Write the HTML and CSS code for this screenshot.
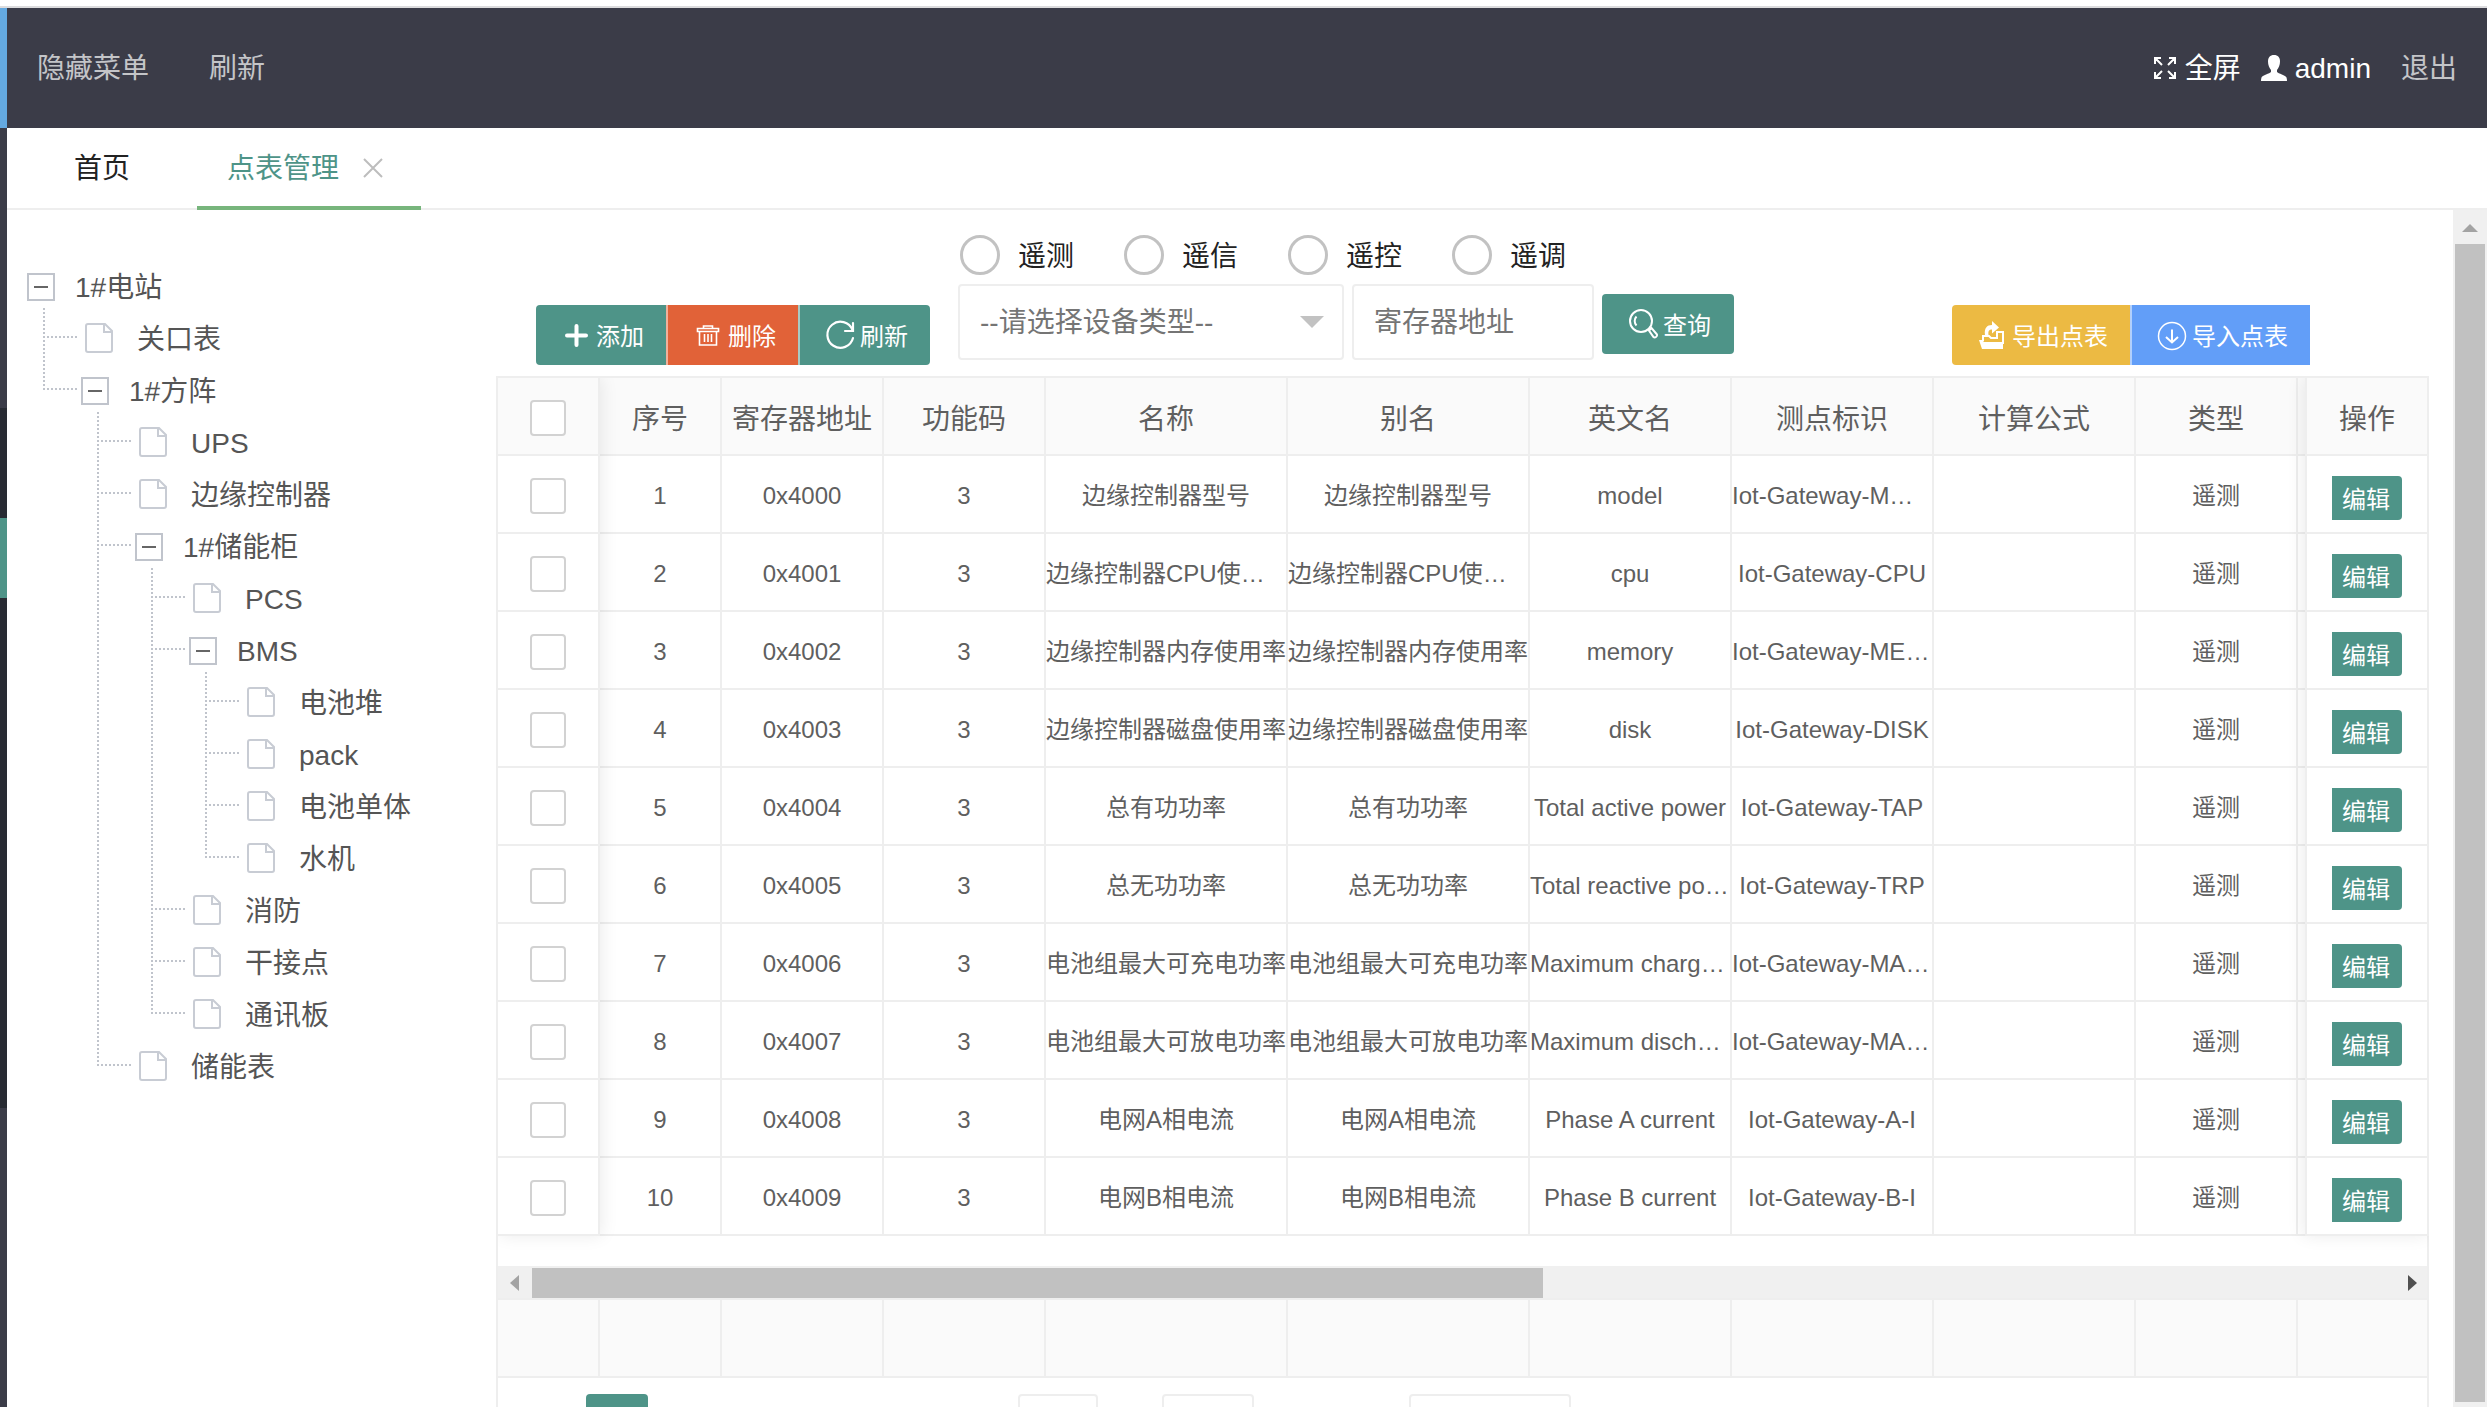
FILE: index.html
```html
<!DOCTYPE html>
<html lang="zh-CN">
<head>
<meta charset="utf-8">
<title>点表管理</title>
<link rel="stylesheet" href="styles.css">
</head>
<body>
<div class="app">
  <nav class="rail">
    <div class="rail-logo"></div>
    <div class="rail-head"></div>
    <div class="rail-item"></div>
    <div class="rail-active"></div>
    <div class="rail-menu"></div>
    <div class="rail-rest"></div>
  </nav>
  <div class="page">
    <header class="topbar">
      <a class="top-link" href="#">隐藏菜单</a>
      <a class="top-link" href="#">刷新</a>
      <div class="top-right">
        <a class="top-action" href="#">
          <svg width="24" height="24" viewBox="0 0 24 24" fill="none" stroke="#fff" stroke-width="2"><path d="M2 8V2h6M2 2l7 7M16 2h6v6M22 2l-7 7M2 16v6h6M2 22l7-7M22 16v6h-6M22 22l-7-7"/></svg>
          全屏</a>
        <a class="top-action" href="#">
          <svg width="26" height="26" viewBox="0 0 26 26" fill="#fff"><path d="M13 0c4 0 6 2.600 6 6.500 0 3.500-1.300 6.500-3 8.500v2c1 1.500 9 3.500 9.500 5.500.400 1.200.500 2.500.500 3.500H0c0-1 .100-2.300.500-3.500C1 20.500 9 18.500 10 17v-2c-1.700-2-3-5-3-8.500C7 2.600 9 0 13 0z"/></svg>
          admin</a>
        <a class="top-link top-exit" href="#">退出</a>
      </div>
    </header>
    <div class="tabs">
      <a class="tab" href="#">首页</a>
      <a class="tab tab-on" href="#">点表管理
        <svg width="20" height="20" viewBox="0 0 20 20" stroke="#bdbdbd" stroke-width="2"><path d="M1 1l18 18M19 1L1 19"/></svg></a>
    </div>
    <div class="body">
      <aside class="side">
        <ul class="tree" id="tree"></ul>
      </aside>
      <main class="content">
        <form class="toolbar">
          <div class="btns">
            <button class="btn btn-l" type="button"><svg class="ic" viewBox="0 0 32 32" stroke="#fff" stroke-width="4" stroke-linecap="round"><path d="M16.500 7v19M7 16.500h19"/></svg>添加</button>
            <button class="btn btn-red" type="button"><svg class="ic" viewBox="0 0 32 32" fill="none" stroke="#fff" stroke-width="1.600"><path d="M5.500 9.500h21v3h-21zM11.500 9.500V7h9v2.500M7.500 12.500v13.500h17V12.500M12.500 15v8M16 15v8M19.500 15v8"/></svg>删除</button>
            <button class="btn btn-r" type="button"><svg class="ic" viewBox="0 0 32 32" fill="none" stroke="#fff" stroke-width="2.200" stroke-linecap="round"><path d="M29 4v8h-8M28.500 11A13 13 0 1 0 29 19"/></svg>刷新</button>
          </div>
          <div class="filters">
            <div class="radios">
              <label class="radio"><input type="radio" name="kind"><span>遥测</span></label>
              <label class="radio"><input type="radio" name="kind"><span>遥信</span></label>
              <label class="radio"><input type="radio" name="kind"><span>遥控</span></label>
              <label class="radio"><input type="radio" name="kind"><span>遥调</span></label>
            </div>
            <div class="fields">
              <div class="select"><select aria-label="设备类型"><option>--请选择设备类型--</option></select></div>
              <input class="addr" type="text" placeholder="寄存器地址" aria-label="寄存器地址">
              <button class="btn btn-search" type="button"><svg class="ic" viewBox="0 0 32 32" fill="none" stroke="#fff" stroke-width="2"><circle cx="14" cy="13" r="11"/><path d="M9.500 17.500A6.500 6.500 0 0 1 9.500 8.500M22 22.500l2.500-2.500 5.500 6.500q.500 1.500-1 2.500t-2.500 0z"/></svg>查询</button>
            </div>
          </div>
          <div class="btns btns-io">
            <button class="btn btn-l btn-gold" type="button"><svg class="ic" viewBox="0 0 32 32" fill="#fff"><path d="M3 21h3l2 2h19v7H6z"/><path d="M9 16C8 9 11 6 16 6V2l7 6.500-7 6v-4c-3 0-4 1.500-3.500 5.500z"/><path d="M7 22v-5h6l2 2h6v-6h6v12" fill="none" stroke="#fff" stroke-width="2"/></svg>导出点表</button>
            <button class="btn btn-blue" type="button"><svg class="ic" viewBox="0 0 32 32" fill="none" stroke="#fff" stroke-width="2"><circle cx="16" cy="17" r="13.500" stroke-width="1.500"/><path d="M16 10.500v13M10 18l6 5.500 6-5.500"/></svg>导入点表</button>
          </div>
        </form>
        <div class="grid">
          <div class="grid-view">
            <table class="data">
              <colgroup><col class="c-check"><col class="c-no"><col class="c-mid"><col class="c-mid"><col class="c-wide"><col class="c-wide"><col class="c-en"><col class="c-en"><col><col class="c-mid"><col class="c-gap"><col class="c-no"></colgroup>
              <thead><tr><th><input type="checkbox" aria-label="全选"></th><th>序号</th><th>寄存器地址</th><th>功能码</th><th>名称</th><th>别名</th><th>英文名</th><th>测点标识</th><th>计算公式</th><th>类型</th><th></th><th>操作</th></tr></thead>
              <tbody id="rows"></tbody>
            </table>
            <div class="shade shade-l"></div>
            <div class="shade shade-r"></div>
          </div>
          <div class="hbar"><i class="arrow arrow-l"></i><div class="hthumb"></div><i class="arrow arrow-r"></i></div>
          <table class="data total">
            <colgroup><col class="c-check"><col class="c-no"><col class="c-mid"><col class="c-mid"><col class="c-wide"><col class="c-wide"><col class="c-en"><col class="c-en"><col><col class="c-mid"><col class="c-last"></colgroup>
            <tbody><tr><td></td><td></td><td></td><td></td><td></td><td></td><td></td><td></td><td></td><td></td><td></td></tr></tbody>
          </table>
          <div class="pager">
            <span class="pg-now"></span><span class="pg-box pg-skip"></span><span class="pg-box pg-go"></span><span class="pg-box pg-limit"></span>
          </div>
        </div>
      </main>
      <div class="vbar"><i class="arrow arrow-u"></i><div class="vthumb"></div></div>
    </div>
  </div>
</div>
<script src="app.js"></script>
</body>
</html>
```
FILE: styles.css
```css
* { box-sizing: border-box; }
body {
  margin: 0;
  height: 100vh;
  overflow: hidden;
  background: #fff;
  color: #5f5f5f;
  font: 28px/40px "Liberation Sans", "Noto Sans CJK SC", sans-serif;
}
a { color: inherit; text-decoration: none; }
button, input, select { font: inherit; margin: 0; }
ul { list-style: none; margin: 0; padding: 0; }

.app { display: flex; height: 100vh; padding-top: 6px; }
.rail { display: flex; flex-direction: column; width: 7px; border-top: 2px solid #dcdcde; }
.rail-logo { height: 120px; background: #64a9e0; }
.rail-head { height: 280px; background: #3b3c48; }
.rail-item { height: 110px; background: #282b33; }
.rail-active { height: 80px; background: #4e9488; }
.rail-menu { height: 510px; background: #282b33; }
.rail-rest { flex: 1; background: #3b3c48; }
.page { flex: 1; min-width: 0; display: flex; flex-direction: column; border-top: 2px solid #dcdcde; }

.topbar { flex: none; display: flex; align-items: center; gap: 60px; height: 120px; padding: 2px 30px 0; background: #3b3c48; }
.top-link { color: #c4c5c8; }
.top-right { display: flex; align-items: center; gap: 20px; margin-left: auto; color: #fff; }
.top-action { display: flex; align-items: center; gap: 8px; }
.top-action svg { margin-top: -2px; }
.top-exit { margin-left: 10px; }

.tabs { flex: none; display: flex; height: 82px; padding-left: 37px; border-bottom: 2px solid #eee; }
.tab { display: flex; align-items: center; gap: 24px; height: 82px; padding: 0 30px; color: #222; }
.tab-on { margin-left: 37px; padding-right: 38px; color: #4e9488; border-bottom: 4px solid #77b57c; padding-top: 4px; }
.tab svg { margin-top: -2px; }

.body { flex: 1; min-height: 0; display: flex; }
.side { width: 489px; flex: none; padding: 50px 0 0 20px; color: #555; }
.tree ul { padding-left: 54px; }
.tree li { position: relative; }
.node { display: flex; align-items: center; height: 52px; }
.node span { padding-top: 3px; }
.box { width: 28px; height: 28px; margin: 2px 20px 0 0; padding: 0; border: 2px solid #c0c4cc; background: #fff; }
.box::after { content: ""; display: block; width: 14px; height: 2px; margin: 0 auto; background: #666; }
.file { width: 28px; height: 32px; margin: 0 24px 0 4px; fill: none; stroke: #c8ccd4; stroke-width: 2; }
.tree ul > li::before {
  content: ""; position: absolute; left: -38px; top: -4px; bottom: 0; width: 2px;
  background: repeating-linear-gradient(#c0c4cc 0 2px, transparent 2px 4px);
}
.tree ul > li:last-child::before { bottom: auto; height: 30px; }
.tree ul > li::after {
  content: ""; position: absolute; left: -38px; top: 24px; width: 34px; height: 2px;
  background: repeating-linear-gradient(90deg, #c0c4cc 0 2px, transparent 2px 4px);
}

.content { flex: 1; min-width: 0; padding-right: 24px; }
.toolbar { display: flex; align-items: flex-end; padding: 25px 119px 11px 40px; }
.btns { display: flex; }
.btn { display: flex; align-items: center; gap: 4px; height: 60px; padding: 4px 22px 0 24px; border: 0; background: #4e9488; color: #fff; font-size: 24px; line-height: 32px; white-space: nowrap; }
.btns .btn + .btn { border-left: 2px solid rgba(255, 255, 255, .5); }
.btn-l { border-radius: 4px 0 0 4px; }
.btn-r { border-radius: 0 4px 4px 0; }
.btns .btn-red { background: #e16238; }
.btns .btn-gold { background: #ecba43; }
.btns .btn-blue { background: #629ef8; }
.ic { width: 32px; height: 32px; flex: none; margin-top: -4px; }
.btns-io { margin-left: auto; }
.filters { display: flex; flex-direction: column; gap: 9px; margin: 0 0 5px 28px; }
.radios { display: flex; gap: 50px; padding-left: 2px; }
.radio { display: flex; align-items: center; gap: 18px; height: 40px; color: #222; }
.radio span { padding-top: 3px; }
.radio input { appearance: none; width: 40px; height: 40px; border: 3px solid #c2c2c2; border-radius: 50%; }
.fields { display: flex; align-items: center; gap: 8px; }
.select { position: relative; }
.select select, .addr { display: block; height: 76px; border: 2px solid #eee; border-radius: 4px; background: #fff; color: #757575; }
.select select { appearance: none; width: 386px; padding: 2px 20px 0; }
.select::after { content: ""; position: absolute; right: 20px; top: 32px; border: 12px solid transparent; border-top-color: #c2c2c2; border-bottom: 0; pointer-events: none; }
.addr { width: 242px; padding: 2px 20px 0; }
.addr::placeholder { color: #757575; opacity: 1; }
.fields .btn-search { margin-top: 4px; padding: 4px 23px 0 25px; border-radius: 4px; }

.grid { border: 2px solid #eee; border-right-width: 0; border-bottom: 0; background: linear-gradient(#eee, #eee) right / 2px 100% no-repeat; }
.grid-view { position: relative; overflow: hidden; padding-bottom: 30px; }
.data { width: 100%; table-layout: fixed; border-spacing: 0; font-size: 24px; line-height: 36px; text-align: center; }
.data th, .data td { height: 78px; padding: 4px 0 0; border: solid #eee; border-width: 0 2px 2px 0; white-space: nowrap; overflow: hidden; }
.data th { background: #fafafa; font-size: 28px; font-weight: 400; padding-top: 7px; }
.data th:first-child { padding-top: 4px; }
.data td.clip { text-align: left; }
.data input { appearance: none; display: block; width: 36px; height: 36px; margin: 0 auto; border: 2px solid #d2d2d2; border-radius: 4px; background: #fff; }
.c-check { width: 102px; }
.c-no { width: 122px; }
.c-mid { width: 162px; }
.c-wide { width: 242px; }
.c-en { width: 202px; }
.c-gap { width: 9px; }
.c-last { width: 131px; }
.edit { display: block; height: 44px; margin: 4px auto 0; padding: 3px 12px 0 10px; border: 0; border-radius: 0 4px 4px 0; background: #4e9488; color: #fff; font-size: 24px; line-height: 40px; }
.shade { position: absolute; top: 0; bottom: 30px; pointer-events: none; }
.shade-l { left: 0; width: 102px; box-shadow: 2px 0 16px rgba(0, 0, 0, .08); }
.shade-r { right: 0; width: 124px; box-shadow: -2px 0 16px rgba(0, 0, 0, .08); }

.hbar { display: flex; align-items: center; height: 34px; margin-right: 2px; padding: 2px 10px 0 12px; background: #f0f0f0; border-bottom: 2px solid #eee; }
.hthumb { width: 53%; height: 30px; margin-left: 13px; background: #c1c1c1; }
.arrow { flex: none; width: 0; height: 0; border: 8px solid transparent; }
.arrow-l { border-left: 0; border-right: 9px solid #a3a3a3; }
.arrow-r { border-right: 0; border-left: 9px solid #505050; margin-left: auto; }
.arrow-u { border-top: 0; border-bottom: 8px solid #a3a3a3; }
.total td { background: #fafafa; }
.pager { display: flex; padding: 16px 0 16px 88px; }
.pg-now { width: 62px; height: 56px; border-radius: 4px; background: #4e9488; }
.pg-box { height: 56px; border: 2px solid #eee; border-radius: 4px; }
.pg-skip { width: 80px; margin-left: 370px; }
.pg-go { width: 92px; margin-left: 64px; }
.pg-limit { width: 162px; margin-left: 155px; }

.vbar { flex: none; display: flex; flex-direction: column; align-items: center; width: 34px; padding: 14px 0 5px; background: #f0f0f0; }
.vthumb { flex: 1; width: 30px; margin-top: 12px; background: #c1c1c1; }
```
FILE: app.js
```js
const tree = ['1#电站', [
  ['关口表'],
  ['1#方阵', [
    ['UPS'],
    ['边缘控制器'],
    ['1#储能柜', [
      ['PCS'],
      ['BMS', [['电池堆'], ['pack'], ['电池单体'], ['水机']]],
      ['消防'],
      ['干接点'],
      ['通讯板']
    ]],
    ['储能表']
  ]]
]];

const fileIcon = '<svg class="file" viewBox="0 0 28 32"><path d="M3 2h17l7 7v19a2 2 0 0 1-2 2H3a2 2 0 0 1-2-2V4a2 2 0 0 1 2-2zM19 2v8h8"/></svg>';

function nodeHtml([name, children]) {
  const icon = children ? `<button class="box" type="button" aria-label="${name}"></button>` : fileIcon;
  const sub = children ? `<ul>${children.map(nodeHtml).join('')}</ul>` : '';
  return `<li><div class="node">${icon}<span>${name}</span></div>${sub}</li>`;
}
document.getElementById('tree').innerHTML = nodeHtml(tree);

const points = [
  ['边缘控制器型号', 'model', 'Iot-Gateway-M…'],
  ['边缘控制器CPU使…', 'cpu', 'Iot-Gateway-CPU'],
  ['边缘控制器内存使用率', 'memory', 'Iot-Gateway-ME…'],
  ['边缘控制器磁盘使用率', 'disk', 'Iot-Gateway-DISK'],
  ['总有功功率', 'Total active power', 'Iot-Gateway-TAP'],
  ['总无功功率', 'Total reactive po…', 'Iot-Gateway-TRP'],
  ['电池组最大可充电功率', 'Maximum charg…', 'Iot-Gateway-MA…'],
  ['电池组最大可放电功率', 'Maximum disch…', 'Iot-Gateway-MA…'],
  ['电网A相电流', 'Phase A current', 'Iot-Gateway-A-I'],
  ['电网B相电流', 'Phase B current', 'Iot-Gateway-B-I']
];
const cell = t => `<td${t.endsWith('…') ? ' class="clip"' : ''}>${t}</td>`;
document.getElementById('rows').innerHTML = points.map(([name, en, tag], i) =>
  `<tr><td><input type="checkbox" aria-label="${i + 1}"></td>` +
  [String(i + 1), '0x400' + i, '3', name, name, en, tag, '', '遥测', ''].map(cell).join('') +
  '<td><button class="edit" type="button">编辑</button></td></tr>'
).join('');
```
